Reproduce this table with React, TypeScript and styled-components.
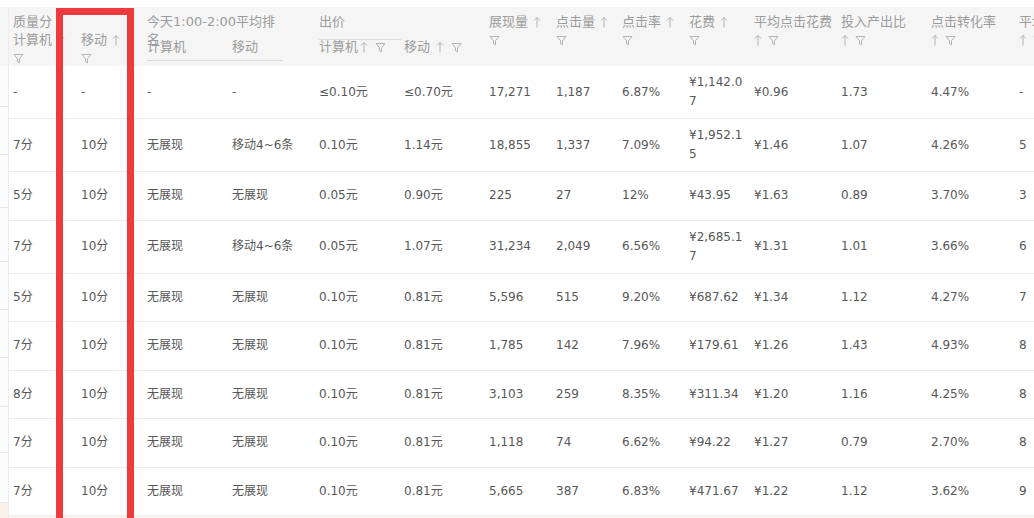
import React from "react";
import styled, { createGlobalStyle } from "styled-components";

const GlobalStyle = createGlobalStyle`
  html, body { margin: 0; padding: 0; background: #ffffff; overflow: hidden; }
  body { font-family: "DejaVu Sans", "Noto Sans CJK SC", sans-serif; }
`;

const COLS = "68px 66px 85px 87px 85px 85px 67px 66px 67px 65px 87px 90px 88px 60px";

const Page = styled.div`
  position: relative;
  width: 1034px;
  height: 518px;
  overflow: hidden;
  padding-top: 7px;
  box-sizing: border-box;
  display: flex;
  flex-direction: column;
`;

const Main = styled.div`
  display: flex;
  flex-direction: row;
`;

const LeftStrip = styled.div`
  width: 8px;
  flex: none;
  display: flex;
  flex-direction: column;
  border-right: 1px solid #ececec;
`;

const StripHead = styled.div`
  height: 59px;
  background: #f5f5f5;
`;

const StripCell = styled.div<{ $h: number; $beige?: boolean }>`
  height: ${(p) => p.$h}px;
  box-sizing: border-box;
  border-bottom: 1px solid #e6e6e6;
  background: ${(p) => (p.$beige ? "#faf2e8" : "#fcfcfc")};
`;

const Table = styled.div`
  display: flex;
  flex-direction: column;
  flex: none;
`;

const HeaderRow = styled.div`
  display: grid;
  grid-template-columns: ${COLS};
  height: 59px;
  background: #f5f5f5;
  color: #9c9c9c;
  font-size: 13px;
  line-height: 18px;
`;

const HeadCell = styled.div<{ $pt?: number }>`
  padding: ${(p) => p.$pt ?? 6}px 4px 0 4px;
  white-space: nowrap;
`;

const HeadLine = styled.div`
  display: flex;
  align-items: center;
  height: 18px;
`;

const GroupCell = styled.div`
  grid-column: span 2;
  display: flex;
  flex-direction: column;
  padding: 6px 0 0 4px;
`;

const GroupTitle = styled.div<{ $w: number; $underline?: boolean }>`
  width: ${(p) => p.$w}px;
  height: 18px;
  overflow: visible;
  white-space: normal;
  ${(p) =>
    p.$underline
      ? "padding-bottom: 8px; border-bottom: 1px solid #dcdcdc;"
      : ""}
`;

const SubRow = styled.div<{ $w: number; $underline?: boolean; $mt: number; $lh: number }>`
  display: grid;
  grid-template-columns: 85px 1fr;
  width: ${(p) => p.$w}px;
  margin-top: ${(p) => p.$mt}px;
  line-height: ${(p) => p.$lh}px;
  white-space: nowrap;
  ${(p) => (p.$underline ? "padding-bottom: 4px; border-bottom: 1px solid #dcdcdc;" : "")}
`;

const SubLabel = styled.span`
  display: flex;
  align-items: center;
`;

const BodyRow = styled.div`
  display: grid;
  grid-template-columns: ${COLS};
  min-height: 48.5px;
  align-items: center;
  border-bottom: 1px solid #ebebeb;
  box-sizing: border-box;
  color: #575757;
  font-size: 12px;
  line-height: 19px;
`;

const Cell = styled.div`
  padding: 7px 4px;
  word-break: break-all;
`;

const Footer = styled.div`
  height: 20px;
  background: #faf4ec;
`;

const RedFrame = styled.div`
  position: absolute;
  left: 56px;
  top: 8px;
  width: 78px;
  height: 540px;
  box-sizing: border-box;
  border: 7px solid #ef3a3d;
  pointer-events: none;
`;

const IconSvg = styled.svg<{ $ml?: number }>`
  flex: none;
  margin-left: ${(p) => p.$ml ?? 0}px;
`;

const SortUp = ({ ml = 5 }: { ml?: number }) => (
  <IconSvg $ml={ml} width="8" height="12" viewBox="0 0 8 12">
    <path d="M4 1.5 V11.5 M1 4.5 L4 1.5 L7 4.5" fill="none" stroke="#b3b3b3" strokeWidth="1" />
  </IconSvg>
);

const Filter = ({ ml = 0 }: { ml?: number }) => (
  <IconSvg $ml={ml} width="11" height="11" viewBox="0 0 11 11">
    <path
      d="M1 1.5 H10 L6.5 5.8 V9.8 L4.5 8.8 V5.8 Z"
      fill="none"
      stroke="#b3b3b3"
      strokeWidth="1"
      strokeLinejoin="round"
    />
  </IconSvg>
);

const rows: string[][] = [
  ["-", "-", "-", "-", "≤0.10元", "≤0.70元", "17,271", "1,187", "6.87%", "¥1,142.07", "¥0.96", "1.73", "4.47%", "-"],
  ["7分", "10分", "无展现", "移动4~6条", "0.10元", "1.14元", "18,855", "1,337", "7.09%", "¥1,952.15", "¥1.46", "1.07", "4.26%", "5"],
  ["5分", "10分", "无展现", "无展现", "0.05元", "0.90元", "225", "27", "12%", "¥43.95", "¥1.63", "0.89", "3.70%", "3"],
  ["7分", "10分", "无展现", "移动4~6条", "0.05元", "1.07元", "31,234", "2,049", "6.56%", "¥2,685.17", "¥1.31", "1.01", "3.66%", "6"],
  ["5分", "10分", "无展现", "无展现", "0.10元", "0.81元", "5,596", "515", "9.20%", "¥687.62", "¥1.34", "1.12", "4.27%", "7"],
  ["7分", "10分", "无展现", "无展现", "0.10元", "0.81元", "1,785", "142", "7.96%", "¥179.61", "¥1.26", "1.43", "4.93%", "8"],
  ["8分", "10分", "无展现", "无展现", "0.10元", "0.81元", "3,103", "259", "8.35%", "¥311.34", "¥1.20", "1.16", "4.25%", "8"],
  ["7分", "10分", "无展现", "无展现", "0.10元", "0.81元", "1,118", "74", "6.62%", "¥94.22", "¥1.27", "0.79", "2.70%", "8"],
  ["7分", "10分", "无展现", "无展现", "0.10元", "0.81元", "5,665", "387", "6.83%", "¥471.67", "¥1.22", "1.12", "3.62%", "9"],
];

const stripCells = [41, 48, 53, 54, 48, 48, 49, 46, 50];

const sortFirst = ["展现量", "点击量", "点击率", "花费"];
const sortSecond = ["平均点击花费", "投入产出比", "点击转化率", "平均展现排名"];

export default function App() {
  return (
    <>
      <GlobalStyle />
      <Page>
        <Main>
          <LeftStrip>
            <StripHead />
            {stripCells.map((h, i) => (
              <StripCell key={i} $h={h} />
            ))}
            <StripCell $h={40} $beige />
          </LeftStrip>
          <Table>
            <HeaderRow>
              <HeadCell>
                <HeadLine>质量分</HeadLine>
                <HeadLine>
                  计算机
                  <SortUp />
                </HeadLine>
                <HeadLine>
                  <Filter />
                </HeadLine>
              </HeadCell>
              <HeadCell $pt={24}>
                <HeadLine>
                  移动
                  <SortUp />
                </HeadLine>
                <HeadLine>
                  <Filter />
                </HeadLine>
              </HeadCell>
              <GroupCell>
                <GroupTitle $w={136}>今天1:00-2:00平均排名</GroupTitle>
                <SubRow $w={136} $mt={7} $lh={18} $underline>
                  <SubLabel>计算机</SubLabel>
                  <SubLabel>移动</SubLabel>
                </SubRow>
              </GroupCell>
              <GroupCell>
                <GroupTitle $w={82} $underline>
                  出价
                </GroupTitle>
                <SubRow $w={170} $mt={0} $lh={14}>
                  <SubLabel>
                    计算机
                    <SortUp ml={2} />
                    <Filter ml={7} />
                  </SubLabel>
                  <SubLabel>
                    移动
                    <SortUp ml={6} />
                    <Filter ml={7} />
                  </SubLabel>
                </SubRow>
              </GroupCell>
              {sortFirst.map((t) => (
                <HeadCell key={t}>
                  <HeadLine>
                    {t}
                    <SortUp />
                  </HeadLine>
                  <HeadLine>
                    <Filter />
                  </HeadLine>
                </HeadCell>
              ))}
              {sortSecond.map((t) => (
                <HeadCell key={t}>
                  <HeadLine>{t}</HeadLine>
                  <HeadLine>
                    <SortUp ml={0} />
                    <Filter ml={6} />
                  </HeadLine>
                </HeadCell>
              ))}
            </HeaderRow>
            {rows.map((r, i) => (
              <BodyRow key={i}>
                {r.map((v, j) => (
                  <Cell key={j}>{v}</Cell>
                ))}
              </BodyRow>
            ))}
            <Footer />
          </Table>
        </Main>
        <RedFrame />
      </Page>
    </>
  );
}
